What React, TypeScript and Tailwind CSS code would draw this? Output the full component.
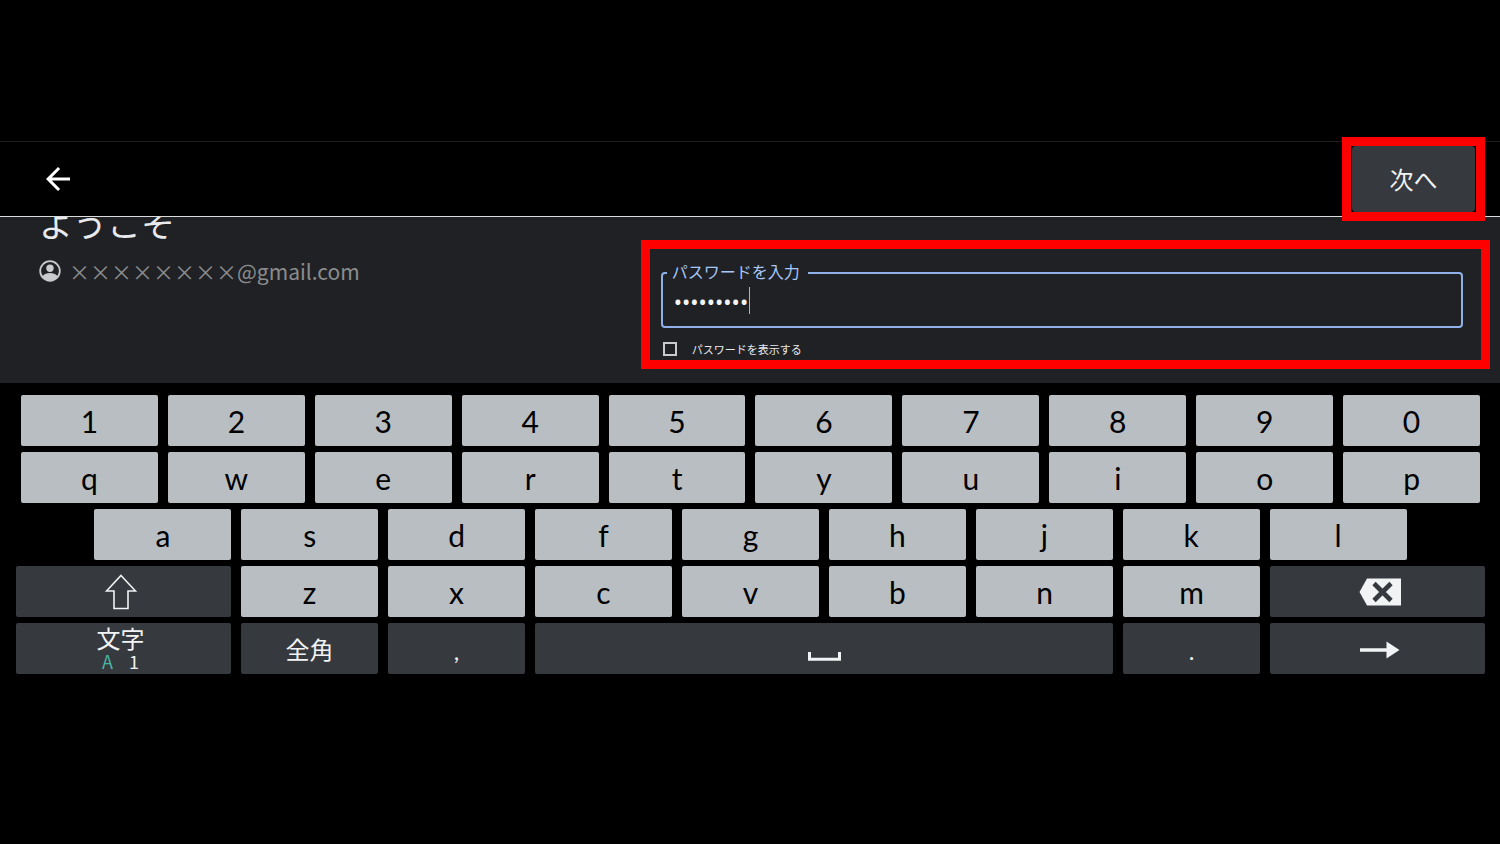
import type { ReactNode } from 'react'
import { MdArrowBack } from 'react-icons/md'

const numberRow = ['1', '2', '3', '4', '5', '6', '7', '8', '9', '0']
const topRow = ['q', 'w', 'e', 'r', 't', 'y', 'u', 'i', 'o', 'p']
const homeRow = ['a', 's', 'd', 'f', 'g', 'h', 'j', 'k', 'l']
const bottomRow = ['z', 'x', 'c', 'v', 'b', 'n', 'm']

function Key({ children, className = '' }: { children: ReactNode; className?: string }) {
  return (
    <button
      type="button"
      className={`h-[51px] rounded-xs bg-[#b9bec2] text-[30px] leading-none text-black ${className}`}
    >
      {children}
    </button>
  )
}

function DarkKey({ children, label, className = '' }: { children?: ReactNode; label?: string; className?: string }) {
  return (
    <button
      type="button"
      aria-label={label}
      className={`flex h-[51px] flex-col items-center justify-center rounded-xs bg-[#36393e] text-2xl leading-none text-[#f1f3f4] ${className}`}
    >
      {children}
    </button>
  )
}

function AccountIcon() {
  return (
    <svg width="22" height="22" viewBox="0 0 22 22" aria-hidden="true">
      <circle cx="11" cy="11" r="9.8" fill="none" stroke="currentColor" strokeWidth="1.8" />
      <circle cx="11" cy="8.2" r="3.7" fill="currentColor" />
      <path d="M3.500 16.200c1.600-2.100 4.500-3.200 7.500-3.200s5.900 1.100 7.500 3.200C16.900 18.900 14.200 20.700 11 20.700s-5.900-1.800-7.500-4.500Z" fill="currentColor" />
    </svg>
  )
}

function Header() {
  return (
    <header className="flex h-[76px] items-center justify-between border-t border-b border-t-[#1c1c1c] border-b-[#dcdcdc] pr-[25px] pl-10">
      <button type="button" aria-label="戻る" className="text-white">
        <MdArrowBack size={36} />
      </button>
      <div className="relative">
        <button type="button" className="block h-[66px] w-[123px] rounded-sm bg-[#36393e] text-2xl text-[#f1f3f4]">
          次へ
        </button>
        <div className="pointer-events-none absolute -inset-x-2.5 -inset-y-[9px] border-9 border-[#ff0000]" />
      </div>
    </header>
  )
}

function SignInForm() {
  return (
    <main className="flex h-[166px] items-start justify-between overflow-hidden bg-[#202124] pr-2.5">
      <div className="-mt-3 pl-[39px]">
        <h1 className="text-[34px] leading-9 text-[#e8eaed]">ようこそ</h1>
        <div className="mt-[18px] flex items-center gap-2 text-[#c8cacd]">
          <AccountIcon />
          <span className="text-[21px] leading-6 text-[#8b8c8e]">××××××××@gmail.com</span>
        </div>
      </div>

      <form className="mt-[23px] h-[129px] w-[57%] shrink-0 border-9 border-[#ff0000] pt-3.5 pr-[18px] pl-[11px]">
        <fieldset className="relative h-[65px] rounded-sm border-2 border-[#8fb0e8] pl-[11px]">
          <legend className="-ml-[7px] pr-2 pb-1 pl-[5px] text-base leading-4 text-[#a8c7fa]">
            <label htmlFor="password">パスワードを入力</label>
          </legend>
          <input
            id="password"
            type="password"
            defaultValue="password1"
            className="block h-9 w-full bg-transparent font-[Noto_Sans] text-[22px] text-[#f1f3f4] outline-none"
          />
          <span className="absolute top-1 left-[86px] h-[27px] w-px bg-[#b0b2b5]" />
        </fieldset>
        <label className="mt-[13px] ml-0.5 flex items-center gap-[15px] text-[11px] leading-4 text-[#e8eaed]">
          <input type="checkbox" className="size-3.5 appearance-none border-2 border-[#c8cacd]" />
          パスワードを表示する
        </label>
      </form>
    </main>
  )
}

function Keyboard() {
  return (
    <section aria-label="キーボード" className="flex flex-col gap-1.5 pt-3 pr-[15px] pl-4 font-[Lato,Noto_Sans_CJK_JP,sans-serif]">
      <div className="grid grid-cols-10 gap-2.5 px-[5px]">
        {numberRow.map(k => <Key key={k}>{k}</Key>)}
      </div>
      <div className="grid grid-cols-10 gap-2.5 px-[5px]">
        {topRow.map(k => <Key key={k}>{k}</Key>)}
      </div>
      <div className="grid grid-cols-20 gap-2.5 px-[5px]">
        {homeRow.map((k, i) => <Key key={k} className={i === 0 ? 'col-span-2 col-start-2' : 'col-span-2'}>{k}</Key>)}
      </div>
      <div className="grid grid-cols-[215fr_repeat(7,137fr)_215fr] gap-x-2.5 gap-y-1.5">
        <DarkKey label="シフト" className="pr-1.5">
          <svg width="32" height="36" viewBox="0 0 32 36" fill="none" stroke="currentColor" strokeWidth="1.6">
            <path d="M16 1.500 30.500 17H23v17.500H9V17H1.500Z" />
          </svg>
        </DarkKey>
        {bottomRow.map(k => <Key key={k}>{k}</Key>)}
        <DarkKey label="削除" className="pl-1">
          <svg width="42" height="28" viewBox="0 0 42 28">
            <path d="M8 .5h34v27H8L.5 14Z" fill="currentColor" />
            <path d="m15 5.500 17 17M32 5.500l-17 17" stroke="#36393e" strokeWidth="4.600" />
          </svg>
        </DarkKey>
        <DarkKey className="pr-1.5">
          <span>文字</span>
          <span className="flex gap-4 font-[Noto_Sans_CJK_JP] text-lg leading-5">
            <span className="text-[#4db6a4]">A</span>
            <span>1</span>
          </span>
        </DarkKey>
        <DarkKey className="pt-0.5">全角</DarkKey>
        <DarkKey className="pt-1">,</DarkKey>
        <DarkKey label="スペース" className="col-span-4 pt-4">
          <svg width="33" height="9" viewBox="0 0 33 9" fill="none" stroke="currentColor" strokeWidth="3">
            <path d="M1.500 0v7.200h30V0" />
          </svg>
        </DarkKey>
        <DarkKey className="pt-1">.</DarkKey>
        <DarkKey label="次へ移動" className="pt-0.5 pl-1">
          <svg width="40" height="18" viewBox="0 0 40 18" fill="currentColor">
            <path d="M0 7.300h26.500V.5L39.500 9l-13 8.500v-6.800H0Z" />
          </svg>
        </DarkKey>
      </div>
    </section>
  )
}

export default function App() {
  return (
    <div className="min-h-screen bg-black pt-[141px] font-[Noto_Sans_CJK_JP,sans-serif]">
      <Header />
      <SignInForm />
      <Keyboard />
    </div>
  )
}
